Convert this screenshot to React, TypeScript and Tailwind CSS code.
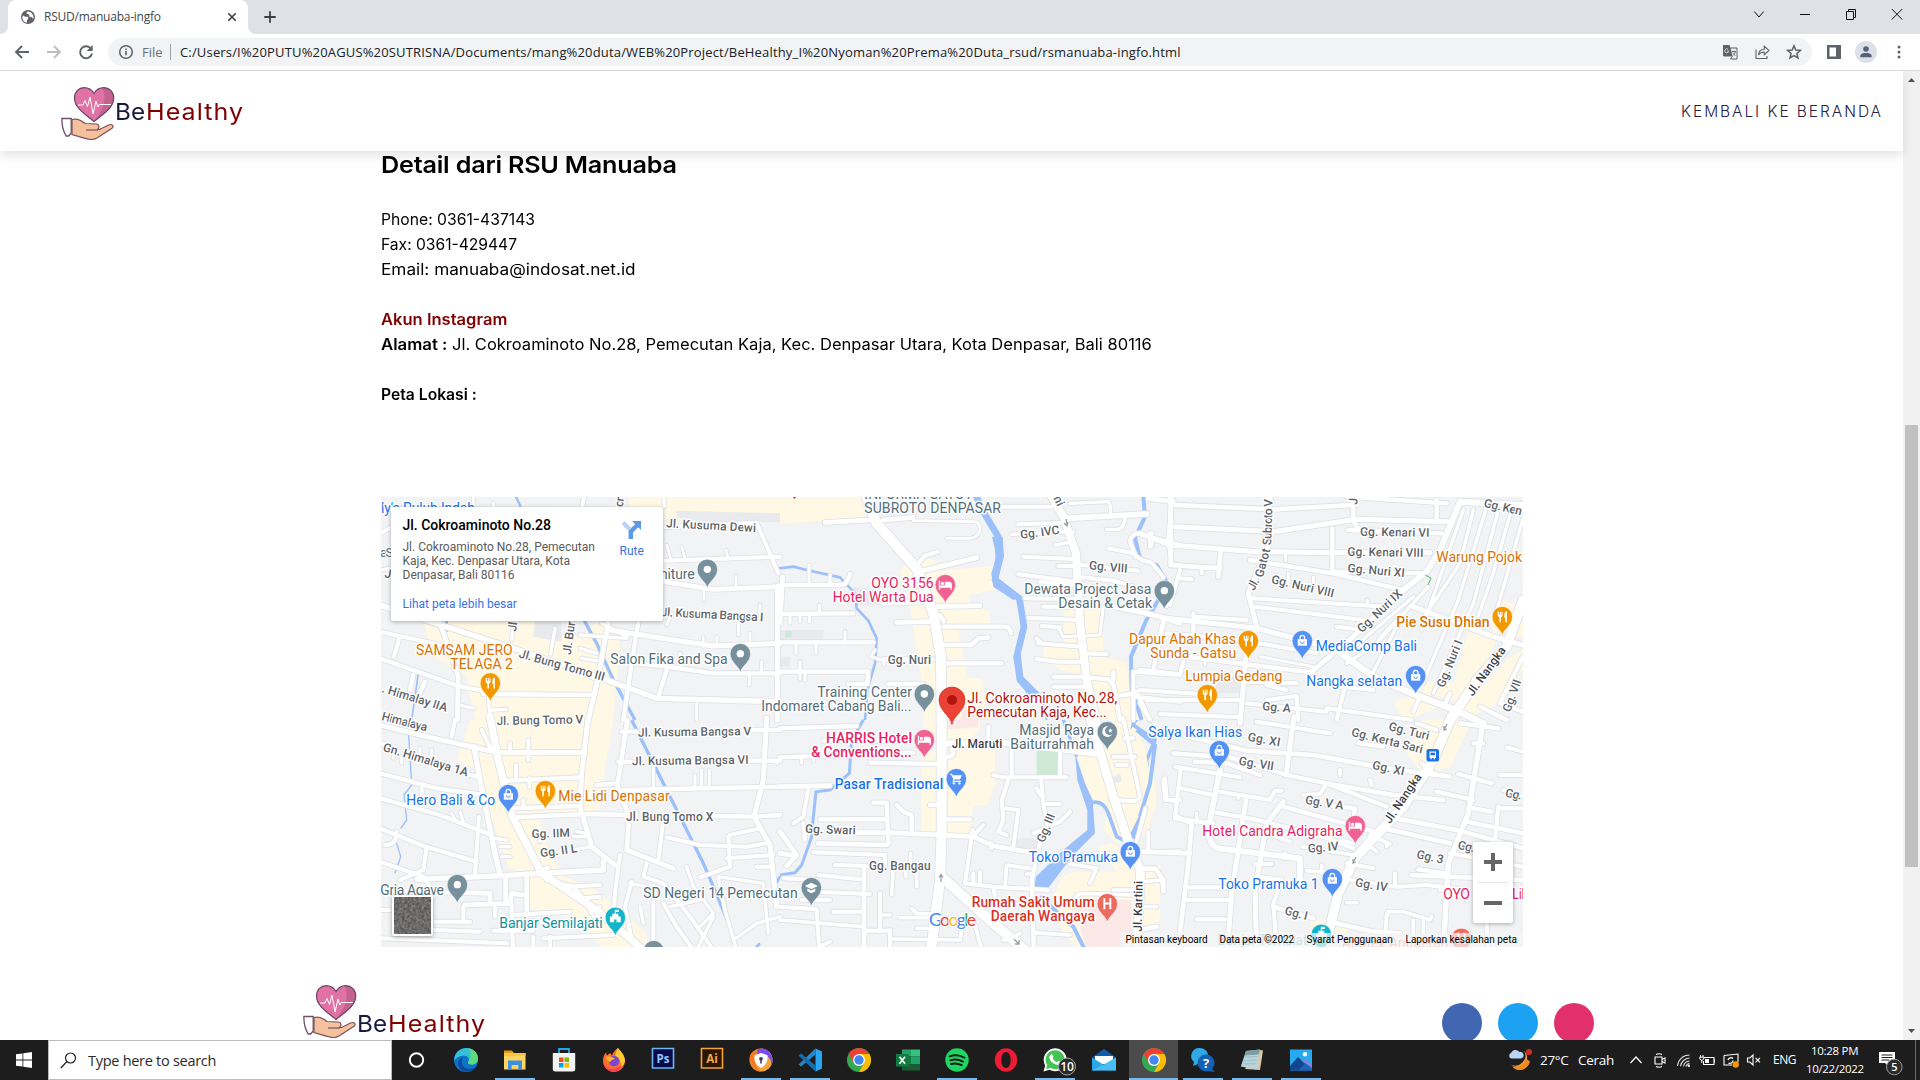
import React, { useLayoutEffect, useRef, useState } from "react";

/* Text that fills a given width, by spreading its letters or by stretching them. */
function Fit({ w, wide = false, className = "", children }: { w: number; wide?: boolean; className?: string; children: string }) {
  const ref = useRef<HTMLSpanElement>(null);
  const [natural, setNatural] = useState(0);
  useLayoutEffect(() => {
    if (ref.current) setNatural(ref.current.offsetWidth);
  }, [children]);
  const style = !natural
    ? undefined
    : wide
      ? { transform: `scaleX(${w / natural})` }
      : { letterSpacing: (w - natural) / Math.max(1, children.length - 1) + "px" };
  return (
    <span className={"inline-block shrink-0 whitespace-pre " + className} style={{ width: w }}>
      <span ref={ref} className="inline-block origin-left" style={style}>{children}</span>
    </span>
  );
}

/* ------------------------------------------------------------------ */
/* Map data: the map is cut in six tiles with 3 units to the pixel      */
/* ------------------------------------------------------------------ */

type Road = [number, string];
type Label = {
  t: string; x: number; y: number; w: number; r?: number; s?: number; c?: string; b?: boolean; street?: boolean;
};
type PinData = { x: number; y: number; c: string; k: string };
type Tile = {
  ox: number; oy: number; yellow: string; gray?: string; green?: string; pink?: string;
  water: Road[]; waterFill?: string; roads: Road[]; labels: Label[]; pins: PinData[];
};

const GRAY = "#78909c";
const ORANGE = "#f29900";
const BLUE = "#5491f5";
const PINK = "#f06292";
const TEAL = "#12b5cb";
const RED = "#ec6a5e";

const tGray = "#546e7a";
const tOrange = "#d97200";
const tBlue = "#1a73e8";
const tPink = "#e91e63";
const tTeal = "#0f8f9c";
const tRed = "#d93025";

const st = (t: string, x: number, y: number, w: number, r = 0, c = "#5f6368"): Label => ({ t, x, y, w, r, c, s: 36, street: true });
const poi = (t: string, x: number, y: number, w: number, c: string, b = false): Label => ({ t, x, y, w, c, b, s: 42 });

const tiles: Tile[] = [
  {
    ox: 380, oy: 490,
    yellow: "M745 20H1200V96L850 86L750 70Z M130 395H465V440L520 430L600 440L650 395L720 450L700 690H285L270 620L260 560L160 500Z",
    gray: "M890 62L1200 70V96L960 96L890 82Z M465 395H545V455L460 440Z",
    water: [[8, "M200 390V425"], [10, "M612 390L650 460L700 570L765 690"], [7, "M408 20L422 50"], [5, "M115 550L95 690"], [6, "M1200 232l-8 6"]],
    roads: [
      [16, "M0 345L120 385L400 475L680 570L830 625L1200 635"],
      [15, "M685 395L655 560L625 690"], [13, "M775 395L755 520L730 690"],
      [12, "M0 425L180 465M42 500L58 445M0 130L60 100"],
      [14, "M178 395L205 470L235 560L232 690"],
      [13, "M0 505L235 588L305 602M100 555L90 600M135 575L115 620"],
      [13, "M310 612L640 615"], [10, "M325 620L330 690M335 660L378 658M240 645L280 655"],
      [12, "M612 20L605 60M855 112L1130 98L1195 250M850 212L1200 200"],
      [14, "M850 275L1000 298L1200 290"],
      [8, "M860 165L872 205M905 170L915 205M1038 180L1045 205M1068 258V290M972 298V330M280 20V50M340 40V50"],
      [15, "M690 420L880 450L1000 468L1200 460"],
      [15, "M1192 290V690"],
      [8, "M860 405L875 370M970 440V470M1110 430V465M1075 400V435M1140 345V370M1010 440V470"],
      [13, "M765 520L860 530L1000 550L1200 550"], [13, "M860 540L835 620"],
      [9, "M900 490V530M1108 550V585M1145 515V550M950 640V690"],
      [10, "M400 395L395 450M525 415L512 492M600 435L740 445M600 475L650 490M605 505L650 512M665 400L742 440M610 550L640 565"],
      [10, "M0 240L28 235M852 20V50"],
    ],
    labels: [
      { t: "ly's Puluh Indah", x: 3, y: 70, w: 282, c: tBlue, s: 42 },
      { t: "a S", x: 0, y: 200, w: 40, c: tGray, s: 40 },
      st("J", 12, 262, 18, 10), st("Jl. Kusuma Dewi", 858, 112, 270, 3), st("Jl. Kusuma Bangsa I", 842, 378, 308, 3),
      st("Jl. Bung Tomo III", 415, 502, 265, 15.5), st(". Himalay IIA", 4, 606, 203, 17), st("Himalaya", 3, 690, 140, 14),
      st("Jl. Bur", 572, 495, 100, -82), st("Jl", 408, 425, 28, -82), st("Jl. Bung Tomo V", 350, 705, 260, -1), st("or", 728, 52, 30, -82),
      { t: "niture", x: 840, y: 266, w: 104, c: tGray, s: 42 },
      poi("Salon Fika and Spa", 691, 522, 352, tGray),
      poi("SAMSAM JERO", 108, 495, 290, tOrange), poi("TELAGA 2", 211, 537, 188, tOrange),
    ],
    pins: [{ x: 982, y: 238, c: GRAY, k: "dot" }, { x: 1081, y: 491, c: GRAY, k: "dot" }, { x: 331, y: 579, c: ORANGE, k: "food" }],
  },
  {
    ox: 780, oy: 490,
    yellow: "M0 20H245L255 80L125 92L0 102Z M410 205L460 208L480 242L635 228L645 300L565 315L570 340L630 365V400L535 412L560 560L610 570L620 690H430V600L405 460L385 310L357 240Z M850 360H970V500L1035 515L1055 600L1100 690H940L910 560L845 540L790 510V470H850Z",
    gray: "M220 290L300 300V345H215Z M0 420H130V450H0Z M0 500H30V530H0Z",
    green: "M15 423h20v20h-20z",
    pink: "M545 650L620 650L640 690H545Z",
    water: [
      [20, "M585 10L610 65L655 140L656 205L645 270L718 325L732 410L710 500L720 570L765 620"],
      [8, "M0 235L40 230L80 240L180 262L225 310L230 355L265 392L290 445L285 520L262 600L255 690"],
      [12, "M1090 20L1095 80L1065 145L1080 205L1130 225L1160 275M1135 330L1098 392L1053 500L1055 600L1085 690"],
      [6, "M765 620L790 640L800 690"],
    ],
    waterFill: "M636 140H668L672 200L655 265L720 318L700 330L640 290L634 250L650 200Z M700 500L722 490L730 560L780 610L740 610L715 570Z",
    roads: [
      [30, "M255 10L290 100L410 235L460 370L483 500L485 700"],
      [24, "M810 10L850 80L888 190L900 400L920 570L950 700"],
      [14, "M135 97L270 90M310 90L400 82"],
      [8, "M500 145L570 145Q600 140 600 118Q600 95 580 95L400 92"],
      [12, "M410 225L435 197L475 185"], [15, "M430 242L590 203"],
      [14, "M350 397L450 395M310 340L440 335M470 350L600 347"],
      [13, "M490 410H675Q690 412 693 430M490 465H575L595 445L625 443M500 520H665M460 508H310M325 582H430M480 375L492 395"],
      [13, "M0 285L190 285Q205 275 210 252M0 372L220 370M0 457H280M0 545H265L262 582H205"],
      [9, "M87 225V280M150 255V285M30 375V400M60 375V395M88 375V395M118 345V370M195 425V455M48 460V490M108 460V490M60 515V568M75 545V570M285 480L272 500L310 512L312 525"],
      [14, "M8 260L0 400"],
      [12, "M640 50H815M715 103L860 98"], [17, "M860 85L1100 72"],
      [10, "M870 40L985 35Q992 40 992 72M1035 85Q1032 118 1010 118H980M695 133L880 125M825 165L880 155"],
      [12, "M730 200L885 207M835 228H890M715 253L890 275M780 275L880 285M735 325L895 328M790 350H890M745 383L900 390M785 408L840 412"],
      [12, "M905 262L1000 272L1060 290M905 225L1075 242"],
      [9, "M835 410L848 440L960 435L970 350"],
      [12, "M910 490L980 493M775 460L905 470M770 507L830 515H900M820 560H910M820 590H920M770 445L785 460"],
      [13, "M920 562L985 568Q1005 580 1005 610L1020 690M1000 620L1065 610M1000 545V570"],
      [12, "M985 175L1055 188L1085 210L1115 218L1150 262M1200 165L1070 130Q1050 140 1050 155L1068 200M1115 130V165"],
      [12, "M1175 20L1165 150L1175 225H1200"],
      [14, "M1000 350L1120 375L1200 400"], [9, "M1155 390L1120 540M1160 350L1180 290"],
      [12, "M1060 690L1060 550M1060 545L1200 555M1070 605L1110 690M1070 620L1200 635"],
    ],
    labels: [
      poi("INFORMA GATOT", 253, 28, 325, tGray), poi("SUBROTO DENPASAR", 253, 69, 410, tGray),
      st("Gg. IVC", 722, 146, 118, -7), st("Gg. VIII", 926, 238, 116, 5), st("Gg. Nuri", 323, 521, 130, 0),
      st("ni", 820, 24, 30, 65),
      poi("OYO 3156", 274, 295, 187, tPink), poi("Hotel Warta Dua", 158, 337, 303, tPink),
      poi("Dewata Project Jasa", 733, 312, 381, tGray), poi("Desain & Cetak", 835, 354, 281, tGray),
      poi("Training Center", 112, 622, 284, tGray), poi("Indomaret Cabang Bali...", -56, 664, 450, tGray),
      poi("Jl. Cokroaminoto No.28,", 562, 640, 450, "#b31412"), poi("Pemecutan Kaja, Kec...", 562, 682, 418, "#b31412"),
    ],
    pins: [{ x: 496, y: 284, c: PINK, k: "bed" }, { x: 1153, y: 302, c: GRAY, k: "dot" }, { x: 433, y: 612, c: GRAY, k: "dot" }],
  },
  {
    ox: 1140, oy: 490,
    yellow: "M985 425L1070 445L1040 520L960 640L900 620L830 610L870 572L940 580Z M1085 330L1125 340L1110 400L1060 440L1050 380Z M1110 500L1149 480V540L1060 650L970 690L960 660Z M770 630L830 615L900 650L800 690L765 650Z M1120 400H1149V440H1110Z",
    gray: "M205 560H300V610H230Z",
    green: "",
    water: [],
    roads: [
      [14, "M92 20V225L240 235M242 180L235 260"], [12, "M120 240L90 345M120 265L155 268M30 130V170M185 235V250"],
      [14, "M100 45L400 58L640 45M25 25L100 35"],
      [13, "M640 20V95L660 120H625"],
      [15, "M100 110L400 125L650 88L925 95"],
      [15, "M0 130L90 165L350 185L580 188H870"], [13, "M577 115V240"],
      [15, "M390 20L385 170L325 310L350 410L318 500L300 700"],
      [13, "M620 20L920 40M890 30V88M640 120L905 130M580 245L860 250"],
      [13, "M330 210L580 250L780 298"], [9, "M437 195V210M445 250V285M520 262V290M682 330V340"],
      [18, "M790 300L860 245L900 180L960 35L1149 45"],
      [15, "M785 305L640 440L515 545"], [12, "M335 325L740 350M345 350L670 390M590 410L670 420"],
      [15, "M0 365L80 385L350 415L600 480"], [12, "M160 370V430M70 390L40 540M80 430L300 450L530 490M160 380L320 390"],
      [13, "M100 495L520 548M0 540L120 553L130 515"], [8, "M195 480V525M360 500L520 530"],
      [10, "M820 320L620 490M865 290L710 460L620 520M780 390L700 545M770 390L715 450"],
      [15, "M820 350L1060 440L1149 465"],
      [20, "M590 480L700 560L820 612L950 662L1030 700"],
      [10, "M970 60L845 420M1040 50L955 330L840 600M1075 60L1000 340L880 610M1110 75L1060 250L1000 420M1149 85L1065 380M1000 60L960 220L840 400"],
      [28, "M1149 330L1100 470L1010 570L925 700"],
      [13, "M1149 500L1080 640L1149 665M1020 650L1100 690M930 610L910 650"],
      [12, "M0 600L180 612M20 630L300 630M60 672L300 682M0 640L30 690M310 575L470 580M380 585L440 600M380 630L470 618L475 690"],
      [12, "M550 560L600 590L700 600M620 570L590 690M560 655L815 690M320 640L560 665M820 665L840 620"],
    ],
    labels: [
      st("Subroto V", 393, 166, 138, -88), st("Gatot", 368, 264, 88, -75), st("Jl.", 342, 304, 36, -62),
      st("J", 652, 44, 16, -88), st("Gg. Kenari VI", 660, 137, 208, 1), st("Gg. Kenari VIII", 622, 197, 228, 1), st("Gg. Nuri XI", 622, 246, 172, 5),
      st("Gg. Nuri VIII", 392, 279, 192, 13), st("Gg. Nuri IX", 665, 430, 170, -43), st("Gg. Ken", 1030, 50, 116, 13),
      st("Gg. Nuri I", 912, 595, 150, -68), st("Jl. Nangka", 998, 620, 172, -54, "#3c4043"), st("Gg. VII", 1110, 668, 100, -70), st("Gg. A", 366, 660, 86, 5),
      poi("Warung Pojok", 889, 216, 257, tOrange), poi("Pie Susu Dhian", 769, 411, 280, tOrange, true),
      poi("Dapur Abah Khas", -33, 462, 321, tOrange), poi("Sunda - Gatsu", 31, 504, 258, tOrange),
      poi("Lumpia Gedang", 136, 573, 291, tOrange),
      poi("MediaComp Bali", 527, 483, 304, tBlue), poi("Nangka selatan", 499, 588, 288, tBlue),
    ],
    pins: [
      { x: 325, y: 452, c: ORANGE, k: "food" }, { x: 487, y: 452, c: BLUE, k: "bag" }, { x: 1087, y: 380, c: ORANGE, k: "food" },
      { x: 827, y: 557, c: BLUE, k: "bag" }, { x: 202, y: 614, c: ORANGE, k: "food" },
    ],
  },
  {
    ox: 380, oy: 720,
    yellow: "M270 0H700L655 270L600 278H470L510 400L550 470L640 505L720 570L800 640V690H680L560 590L450 565L440 460L385 445L330 280L290 150L232 120Z",
    water: [[10, "M755 0L850 190L910 310L970 430L1000 500L1050 620"], [4, "M85 30L95 195L72 225L80 300L62 325M50 370L62 410L45 460"], [8, "M1200 468L1175 520M1120 690l20-20"]],
    roads: [
      [15, "M0 15L140 50L350 97L615 98"],
      [22, "M330 -10L355 120L395 285L485 460L650 570L790 690"],
      [12, "M305 30L335 92M445 60V120M390 70V92M448 175V200M408 135V175M430 240V260M225 0L215 50"],
      [13, "M365 183L600 172M400 265L595 258M400 292L620 282L740 285M1000 288L1125 290L1200 285"],
      [15, "M625 -10L605 160L600 260L635 380L705 435"],
      [16, "M282 80L300 180L345 400L360 465"],
      [13, "M0 160L170 205L310 225M0 235L180 285L335 345M0 325L130 378L290 425M270 165L300 172M0 70L20 75"],
      [12, "M297 290L285 460M140 380L130 450L60 480M50 335Q50 375 15 375M0 425L130 470L160 515M125 205V235"],
      [9, "M215 280L225 300M240 275L250 305M120 85V100M155 90V115M65 110V130M40 100V115"],
      [16, "M110 478L370 467L480 460L670 450V425"],
      [12, "M500 465L540 490L580 500L610 535L660 530M500 480L560 500L660 495M480 450L505 443"],
      [10, "M345 355L380 360M360 380H390M365 410H390M580 350H620M590 335L620 340M480 360V365M580 390L630 380"],
      [14, "M377 470V550M440 470V590M255 555L390 550L395 520L430 525M150 515L330 520V550"],
      [12, "M395 585L570 575M160 605H270M250 560V600M395 550V620L400 690M160 630L300 635M340 632H460M490 655L700 645M460 690V650M510 650V690M440 605H520M0 570H30M0 655L380 670M345 555V590"],
      [11, "M620 550L640 590M660 560L650 590"],
      [14, "M742 0L712 200L748 290L740 390L880 445"],
      [13, "M725 35H770M1115 30H1200M715 125H755M1110 122H1200M650 195L710 190M730 210L1200 200"],
      [9, "M820 140V200M945 165V200M965 150V200M988 150V200M770 275V300M1185 122L1190 130"],
      [15, "M1160 -5L1150 180L1122 290L1170 375L1190 560"],
      [12, "M850 300L835 420M860 352L960 375L1100 380L1170 368M1045 350L1050 440L960 472M1050 345L1140 325M1040 415L1180 405M1130 440H1180"],
      [12, "M720 405L705 520L700 600M800 430L790 470L850 490L930 590L1000 690M755 485L735 560L755 660M820 545V690M850 550L890 620L940 690"],
      [10, "M920 440L940 500L1000 580L960 620M1015 475L1035 570L1070 690M1015 470L1150 490L1165 640M870 560L960 540M950 690L1000 590M1060 660L1130 610L1200 590M780 560L790 610M750 490L800 500"],
    ],
    labels: [
      st("Gn. Himalaya 1A", 7, 92, 265, 17),
      st("Jl. Kusuma Bangsa V", 774, 50, 340, -0.8), st("Jl. Kusuma Bangsa VI", 756, 136, 350, -0.8), st("Jl. Bung Tomo X", 738, 303, 262, 0),
      st("Gg. IIM", 455, 354, 115, -2), st("Gg. II L", 482, 412, 112, -8),
      poi("Hero Bali & Co", 79, 255, 267, tBlue), poi("Mie Lidi Denpasar", 535, 243, 334, tOrange),
      poi("Gria Agave", 1, 525, 191, tGray), poi("Banjar Semilajati", 358, 624, 310, tTeal), poi("SD Negeri 14 Pemecutan", 790, 534, 463, tGray),
    ],
    pins: [
      { x: 385, y: 224, c: BLUE, k: "bag" }, { x: 496, y: 212, c: ORANGE, k: "food" }, { x: 232, y: 494, c: GRAY, k: "dot" },
      { x: 706, y: 592, c: TEAL, k: "civic" }, { x: 821, y: 692, c: GRAY, k: "dot" },
    ],
  },
  {
    ox: 780, oy: 720,
    yellow: "M425 90H645V195L620 255H580L570 345L425 335Z M500 0H600V30L520 100H500Z M890 100L1000 0H1060L1120 150L1130 250L1100 340L1010 370L970 330L985 270L930 230Z M830 510Q840 455 900 455L1010 455L950 380L1000 370L1130 470V600L1040 690H900L850 640L820 560Z M430 0H470V60H430Z",
    gray: "M990 175L1020 160L1025 185L1000 190Z M710 355H780V400L705 385Z",
    green: "M770 90h65v75h-65z",
    pink: "M885 535L1055 540V640H1035V690H920L895 600Z M500 0H595V22L505 28Z",
    water: [
      [9, "M250 0L215 60L208 160L150 210L108 215L98 310L95 350L65 435L45 458L0 465"],
      [10, "M850 0L890 110"],
      [11, "M935 248Q970 240 985 280L1010 350L1045 368L1105 240L1100 120L1125 60L1060 15V0"],
      [12, "M780 530L830 575L880 620L915 690"],
    ],
    waterFill: "M885 100L915 190L938 240L945 340L880 405L800 510H762L768 470L850 390L922 330L922 270L892 180Z M1045 350L1085 290L1105 200L1115 240L1070 360Z M1050 30L1060 0H1075Z",
    roads: [
      [30, "M485 -10V330L480 480L452 700"], [30, "M485 470L600 575L740 695"],
      [26, "M930 -10L965 110L1000 230L1050 380L1082 450L1070 700"],
      [18, "M500 70H690L880 92L950 102"],
      [12, "M625 20V65M695 75V165M840 95V168M640 165L670 172H860"],
      [13, "M0 25L230 18M130 62H400M0 112L400 98M270 128L470 132M515 90Q530 105 500 112"],
      [9, "M65 115V130M100 112V122"],
      [14, "M0 200L150 197"], [12, "M85 205L70 290L40 310M70 310L75 360"],
      [13, "M280 248H320L325 370M120 298L320 297M350 255L370 275L395 285V330M450 255H480M500 298H570"],
      [14, "M330 338L580 350L640 378L760 398M230 338H325M115 370L320 375M0 335L50 405L20 438M0 400L50 408"],
      [12, "M100 397L315 405V440M165 435L270 438M10 475L110 480M115 465L240 478"],
      [14, "M252 440V700"], [12, "M100 515L270 522M65 540H150M160 575H245M0 560L110 568L118 690M300 520V630M250 632H325M330 630V690"],
      [11, "M340 440L335 525M392 400V430M410 460V500M378 455V470M330 657L540 660L545 628M395 565L410 580L465 582M360 593H450M300 585H330M0 600L250 620M120 680L150 665M410 625H470M585 615L605 690"],
      [12, "M578 330L555 490L640 500L805 510M578 350L610 315M600 455V485M580 460V490M640 500L645 530"],
      [12, "M685 180L665 240L670 300L655 335L680 345M675 265L715 270L700 380M783 175L790 250L805 330M770 205L785 230M790 252H840M870 275L840 305L760 340M634 370V385"],
      [13, "M780 370L755 480L762 700"], [11, "M675 500L680 435L750 445M740 462H760M760 638L870 645M760 585L770 570M720 640L690 660L670 660"],
      [12, "M1030 -5L1080 230Q1075 245 1050 243L1010 240M1000 110H1065M1010 135H1040M1035 55H1060"],
      [12, "M1097 265L1070 365M1150 180L1155 240L1200 240"],
      [11, "M870 432L950 445L930 490M905 405L1000 400M1090 398L1200 393M1105 340V390M1090 485L1145 480L1150 510M1000 510H1080M880 560Q880 520 910 520L1060 525M1090 447H1125M1085 560H1130M1090 630L1120 620"],
    ],
    labels: [
      st("Jl. Maruti", 515, 84, 152, 0, "#3c4043"), st("Gg. Swari", 75, 338, 152, 2), st("Gg. Bangau", 267, 450, 185, 0),
      st("Gg. III", 792, 370, 90, -68), st("Jl. Kartini", 1085, 635, 152, -89, "#3c4043"),
      poi("HARRIS Hotel", 138, 69, 258, tPink, true), poi("& Conventions...", 94, 111, 301, tPink, true),
      poi("Masjid Raya", 718, 45, 224, tGray), poi("Baiturrahmah", 691, 87, 251, tGray),
      poi("Pasar Tradisional", 164, 207, 326, tBlue, true), poi("Toko Pramuka", 746, 426, 268, tBlue),
      poi("Rumah Sakit Umum", 575, 561, 369, tRed, true), poi("Daerah Wangaya", 632, 603, 313, tRed, true),
    ],
    pins: [
      { x: 433, y: 59, c: PINK, k: "bed" }, { x: 982, y: 35, c: GRAY, k: "moon" }, { x: 529, y: 176, c: BLUE, k: "cart" },
      { x: 1051, y: 395, c: BLUE, k: "bag" }, { x: 94, y: 503, c: GRAY, k: "grad" }, { x: 982, y: 551, c: RED, k: "H" },
    ],
  },
  {
    ox: 1140, oy: 720,
    yellow: "M0 60L20 110L45 240L30 300L0 330Z M0 470L60 430V600L0 640Z M845 0H960L990 15L930 145L840 150L800 100Z M510 600H570L630 615L620 640H510Z",
    water: [[12, "M-10 30L45 75L30 190L0 290"]],
    roads: [
      [28, "M935 -10L880 120L790 260L700 355L645 415L595 520L565 640"],
      [14, "M150 50L320 92L520 105L740 145L930 170"],
      [13, "M100 100L270 112L440 165L560 190L760 225L910 240M165 125L260 130L360 165"],
      [15, "M462 -10L438 165"], [12, "M350 5L570 40M655 70L730 80M830 10L890 30M845 130L880 160"],
      [17, "M240 150L208 310Q200 375 235 385L480 415V490"],
      [12, "M105 140L300 172M122 150L105 290M75 175L80 238L110 245M125 205L220 225M240 215L390 240L405 212H425M490 225L540 222L560 190"],
      [15, "M318 240L275 520L262 690"], [13, "M230 278L330 295L550 350L640 385M105 295L220 310M395 345L450 365"],
      [15, "M430 245L380 310L345 510L350 690"], [13, "M430 260L650 320L720 340M560 190L740 260M560 255L645 265L640 300"],
      [14, "M0 395L150 400M110 290L155 310L145 430L120 640"], [10, "M25 335V390M170 280V310M295 225V235M370 325V345"],
      [13, "M140 502H260M140 540H270M170 598H255M0 445H45L70 480V515M0 630L50 620"],
      [12, "M355 470L425 480L400 550L410 690M345 432H395M435 400V415"],
      [14, "M400 560L520 595M570 605L700 635L780 640"],
      [11, "M500 452L570 458M545 435V455M620 548H650M485 380L640 405M600 360L640 370"],
      [12, "M620 430L700 445M630 480L770 500L860 495L980 510M765 460V495M600 150V165M690 180L695 195"],
      [11, "M740 590L745 575H790L870 600L875 590M740 580L735 660M820 600V690M850 605V640"],
      [14, "M740 290L950 330L1149 385M730 325L930 370"], [11, "M690 345L750 372M685 375L710 395M740 380V370"],
      [16, "M1027 20L985 280L925 430L910 690"],
      [13, "M960 10L1075 25M1000 70H1030M955 162L1055 190M890 215L1000 240M985 262L1055 275M980 305L1149 340M1075 260L1062 390M1075 265H1149M835 448L915 460M815 465L1149 480"],
      [12, "M1100 82L1149 95M1080 165H1149M1090 210L1149 230M930 400L1149 440M1040 610L1045 690M900 510H960"],
    ],
    labels: [
      st("Gg. XI", 322, 62, 98, 10), st("Gg. VII", 295, 134, 106, 9), st("Gg. XI", 695, 146, 98, 12), st("Gg. Turi", 744, 30, 124, 14),
      st("Gg. Kerta Sari", 632, 47, 220, 14), st("Gg. V A", 494, 251, 116, 9), st("Gg. IV", 505, 398, 92, -5), st("Gg. 3", 828, 414, 82, 12), st("Gg. IV", 644, 499, 98, 9),
      st("Gg. I", 432, 583, 70, 14), st("Gg.", 1094, 230, 50, 10), st("Gg.", 952, 386, 50, 12),
      st("Jl. Nangka", 750, 313, 172, -56, "#3c4043"),
      poi("Salya Ikan Hias", 25, 51, 282, tBlue), poi("Hotel Candra Adigraha", 187, 348, 421, tPink), poi("Toko Pramuka 1", 235, 507, 301, tBlue),
      poi("OYO", 910, 537, 80, tPink), poi("Lik", 1116, 537, 50, tPink),
      poi("Banjar Tamsiat", 232, 676, 270, "#5db8c1"), poi("Apotek Anugerah", 605, 683, 320, "#eb8a80"),
    ],
    pins: [
      { x: 238, y: 92, c: BLUE, k: "bag" }, { x: 646, y: 317, c: PINK, k: "bed" }, { x: 577, y: 476, c: BLUE, k: "bag" },
      { x: 544, y: 643, c: TEAL, k: "civic" }, { x: 964, y: 655, c: RED, k: "H" },
    ],
  },
];

const tf = (t: Tile) => `translate(${t.ox} ${t.oy}) scale(0.33333)`;

function Glyph({ k }: { k: string }) {
  switch (k) {
    case "dot": return <circle r="3.7" fill="#fff" />;
    case "food": return <path d="M-4.6-5v3.6a2 2 0 0 0 1.6 2V5.5h1.6V.6A2 2 0 0 0 .2-1.400V-5h-1v3h-.7v-3h-1v3h-.8v-3zM4.600-5.500C2.800-5.500 2-3.500 2-1.200V1h1.100v4.500h1.500z" fill="#fff" />;
    case "bag": return <g><path d="M-4.600-1.500h9.200V5h-9.200z" fill="#fff" /><path d="M-2.300-1.500v-1.500a2.300 2.300 0 0 1 4.600 0v1.500" fill="none" stroke="#fff" strokeWidth="1.300" /><path d="M-1.900.800a1.900 1.900 0 0 0 3.800 0" fill="none" stroke={BLUE} strokeWidth="1" /></g>;
    case "bed": return <path d="M-6.500-4h1.300v4.800h4.700v-3.600h4.500a2.500 2.500 0 0 1 2.500 2.500v5.300H5.200V3h-10.400v2h-1.300zM-2.900-2.800a1.600 1.600 0 1 1 0 3.200 1.600 1.600 0 0 1 0-3.200z" fill="#fff" />;
    case "cart": return <g fill="#fff"><path d="M-6.500-5h2.200l.7 1.500h9.200l-2 4.300h-5.400l-.7 1.300h7v1.200h-8.500l1-2.700-2.300-4.500h-1.200z" /><circle cx="-2.400" cy="4.700" r="1.200" /><circle cx="3" cy="4.700" r="1.200" /></g>;
    case "moon": return <g fill="#fff"><path d="M1.500-5.300A5.300 5.300 0 1 0 5 2.400 4.400 4.400 0 1 1 1.500-5.300z" /><path d="M3-3.500l.7 1.600 1.700.1-1.300 1.100.4 1.700L3 .1 1.600 1l.4-1.700-1.300-1.100 1.700-.1z" /></g>;
    case "grad": return <g fill="#fff"><path d="M0-5l6.500 3.300L0 1.700l-6.500-3.400zM-4 .8L0 2.900 4 .8v2.700L0 5.500l-4-2z" /></g>;
    case "civic": return <g fill="#fff"><path d="M-.5-7.500h4v2.200H.6V-3.500H3v2.700h2.400V5H1.200V2.200h-2.400V5h-4.200V-.8H-3v-2.700h2.500z" /></g>;
    default: return <path d="M-4-5.500h2v4.300h4v-4.300h2v11h-2V.8h-4v4.700h-2z" fill="#fff" />;
  }
}

function Pin({ p }: { p: PinData }) {
  return (
    <g transform={`translate(${p.x} ${p.y}) scale(3)`}>
      <path d="M0 18.700C-1.200 12.500-10.200 8.500-10.200 0A10.200 10.200 0 1 1 10.200 0C10.200 8.500 1.200 12.500 0 18.700z" fill={p.c} stroke="#fff" strokeOpacity=".7" strokeWidth=".8" />
      <Glyph k={p.k} />
    </g>
  );
}

function MapText({ l }: { l: Label }) {
  return (
    <text
      transform={`translate(${l.x} ${l.y}) rotate(${l.r ?? 0})`}
      fontSize={l.s} textLength={l.w} fill={l.c} fontWeight={l.street || l.b ? 500 : 400}
      stroke="#fff" strokeWidth={9} strokeOpacity=".9" strokeLinejoin="round" paintOrder="stroke"
    >{l.t}</text>
  );
}

function MapCanvas() {
  return (
    <svg className="block h-[450px] w-[1142px] font-['Roboto',sans-serif]" viewBox="381 497 1142 450">
      <rect x="381" y="497" width="1142" height="450" fill="#f1f3f5" />
      {tiles.map((t, i) => (
        <g key={i} transform={tf(t)}>
          <path d={t.yellow} fill="#fef8e4" />
          {t.gray && <path d={t.gray} fill="#e8eaed" />}
          {t.green && <path d={t.green} fill="#ceead6" />}
          {t.pink && <path d={t.pink} fill="#fce8e6" />}
          {t.waterFill && <path d={t.waterFill} fill="#9cc0f9" />}
          {t.water.map(([w, d], j) => <path key={j} d={d} fill="none" stroke="#9cc0f9" strokeWidth={w} strokeLinejoin="round" />)}
        </g>
      ))}
      {tiles.map((t, i) => (
        <g key={i} transform={tf(t)} fill="none" stroke="#dee1e6" strokeLinecap="round" strokeLinejoin="round">
          {t.roads.map(([w, d], j) => <path key={j} d={d} strokeWidth={w + 5} />)}
        </g>
      ))}
      {tiles.map((t, i) => (
        <g key={i} transform={tf(t)} fill="none" stroke="#fff" strokeLinecap="round" strokeLinejoin="round">
          {t.roads.map(([w, d], j) => <path key={j} d={d} strokeWidth={w} />)}
        </g>
      ))}
      <g fill="none" stroke="#9aa0a6" strokeWidth="1.300">
        <path d="M941 882v-7m-2 2.500l2-3 2 3M1014 939l5 5m0-4v4h-4M1066 519l1 6m-3-2l3 3 1-4M1356 857l-3 6m0-4v4l3-1M1447 724l-3 6m0-4v4l3-1" />
      </g>
      <path d="M1425 575l6 3-3 7" fill="none" stroke="#5bb974" strokeWidth="1" />
      {tiles.map((t, i) => <g key={i} transform={tf(t)}>{t.labels.filter((l) => l.street).map((l, j) => <MapText key={j} l={l} />)}</g>)}
      {tiles.map((t, i) => <g key={i} transform={tf(t)}>{t.pins.map((p, j) => <Pin key={j} p={p} />)}</g>)}
      {tiles.map((t, i) => <g key={i} transform={tf(t)}>{t.labels.filter((l) => !l.street).map((l, j) => <MapText key={j} l={l} />)}</g>)}
      <path d="M793 497h3l-1.500 2z" fill="#e91e63" />
      <rect x="1426.500" y="749" width="12.500" height="12.500" rx="2" fill="#1a73e8" />
      <path d="M1429.500 751.500h6.500v6.500h-1v1.200h-1.200V758h-2.100v1.200h-1.200V758h-1z" fill="#fff" />
      <path d="M1430.500 752.700h4.500v2.500h-4.500z" fill="#1a73e8" />
      <g transform="translate(952 700)">
        <path d="M0 24.500C-1 16-13 11-13 0A13 13 0 1 1 13 0C13 11 1 16 0 24.500z" fill="#ea4335" stroke="#c5221f" strokeWidth=".6" />
        <circle r="5" fill="#b31412" />
      </g>
      <text x="929" y="925.5" fontSize="17.500" textLength="47" fontWeight="400" className="font-['Lato',sans-serif]" stroke="#fff" strokeWidth="2" paintOrder="stroke">
        <tspan fill="#4285f4">G</tspan><tspan fill="#ea4335">o</tspan><tspan fill="#fbbc04">o</tspan><tspan fill="#4285f4">g</tspan><tspan fill="#34a853">l</tspan><tspan fill="#ea4335">e</tspan>
      </text>
    </svg>
  );
}

function MapView() {
  return (
    <div className="relative h-[450px] w-[1142px] overflow-hidden font-['Roboto',sans-serif]">
      <MapCanvas />
      <div className="absolute left-[10px] top-[10px] flex h-[114px] w-[272px] rounded-[2px] bg-white shadow-[0_1px_4px_rgba(0,0,0,0.3)]">
        <div className="flex w-[220px] flex-col pl-3 pt-[10px]">
          <Fit w={148} className="h-4 text-[14px] font-medium leading-4 text-black">Jl. Cokroaminoto No.28</Fit>
          <div className="mt-[7px] flex flex-col text-[12px] leading-[14px] text-[#5b5b5b]">
            <Fit w={192}>Jl. Cokroaminoto No.28, Pemecutan</Fit>
            <Fit w={167}>Kaja, Kec. Denpasar Utara, Kota</Fit>
            <Fit w={112}>Denpasar, Bali 80116</Fit>
          </div>
          <Fit w={114} className="mt-[15px] text-[12px] leading-[14px] text-[#3a73e6]">Lihat peta lebih besar</Fit>
        </div>
        <div className="flex w-[42px] flex-col items-center pt-[13px]">
          <svg className="h-[19px] w-[19px]" viewBox="0 0 19 19">
            <path d="M1 2.500L7.500 9" stroke="#b9d2f8" strokeWidth="4.500" />
            <path d="M8.800 19V11.500L15 5.500" fill="none" stroke="#5c9ae8" strokeWidth="4.500" />
            <path d="M10 1h9v9z" fill="#5c9ae8" />
          </svg>
          <Fit w={24} className="mt-[4px] text-[12px] leading-[16px] text-[#3a73e6]">Rute</Fit>
        </div>
      </div>
      <div className="absolute bottom-[11px] left-[11px] h-[41px] w-[41px] rounded-[2px] bg-white p-[2px] shadow-[0_1px_4px_rgba(0,0,0,0.35)]">
        <svg className="h-full w-full" viewBox="0 0 38 38">
          <filter id="ground" colorInterpolationFilters="sRGB"><feTurbulence type="fractalNoise" baseFrequency=".35" numOctaves="3" seed="4" /><feColorMatrix values=".35 .1 0 0 .2 .3 .15 0 0 .19 .3 .1 .05 0 .18 0 0 0 0 1" /></filter>
          <rect width="38" height="38" fill="#6c6b68" />
          <rect width="38" height="38" filter="url(#ground)" />
        </svg>
      </div>
      <div className="absolute right-[10px] top-[345px] flex h-[81px] w-10 flex-col items-center rounded-[2px] bg-white shadow-[0_1px_4px_rgba(0,0,0,0.3)]">
        <svg className="h-10 w-10" viewBox="0 0 40 40"><path d="M20 11v18M11 20h18" stroke="#666" strokeWidth="4" /></svg>
        <div className="h-px w-[30px] bg-[#e6e6e6]" />
        <svg className="h-10 w-10" viewBox="0 0 40 40"><path d="M11 20h18" stroke="#666" strokeWidth="4" /></svg>
      </div>
      <div className="absolute bottom-0 right-0 flex h-[14px] w-[403px] items-center bg-[#f5f5f5]/70 pl-[6px] text-[10px] leading-[14px] text-black">
        <Fit w={82}>Pintasan keyboard</Fit>
        <Fit w={75} className="ml-3">Data peta ©2022</Fit>
        <Fit w={86} className="ml-3">Syarat Penggunaan</Fit>
        <Fit w={111} className="ml-[13px]">Laporkan kesalahan peta</Fit>
      </div>
    </div>
  );
}

/* ------------------------------------------------------------------ */
/* Web page                                                            */
/* ------------------------------------------------------------------ */

function LogoMark() {
  return (
    <svg className="h-[56px] w-[54px] shrink-0" viewBox="0 0 54 56">
      <path d="M33 36.500C24 29 13.500 23 13.500 13 13.500 6.500 18 2.700 23 2.700c4.500 0 8 2.300 10 5.800 2-3.500 5.500-5.800 10-5.800 5 0 9.700 3.800 9.700 10.300C52.700 23 42 29 33 36.500z" fill="#e173a4" />
      <path d="M43 2.700c5 0 9.700 3.800 9.700 10.300C52.700 23 42 29 33 36.500c6-8 10.500-15 10.500-24 0-4-.5-7-2.500-9.700z" fill="#c4618f" />
      <path d="M33 36.500C24 29 13.500 23 13.500 13 13.500 6.500 18 2.700 23 2.700c4.500 0 8 2.300 10 5.800 2-3.500 5.500-5.800 10-5.800 5 0 9.700 3.800 9.700 10.300C52.700 23 42 29 33 36.500z" fill="none" stroke="#6b4468" strokeWidth="1.200" />
      <path d="M17 20h5l2-4.500 2.500 6 2.500-9.500 3 17 3-13 1.800 6 1.400-2.500H50" fill="none" stroke="#fff" strokeWidth="1" />
      <path d="M11 34.500c5-1.500 9 .5 13 4l11 .5c3.500.2 4 4.500 1 5.500h2.500l9-4.500c3.500-1.500 6 1 3.500 3.300L36 53c-4 2.300-8 1.700-12 .3L11 49.500z" fill="#f5c19c" stroke="#7a5060" strokeWidth="1.200" />
      <path d="M25 45h12" stroke="#7a5060" strokeWidth="1.200" />
      <path d="M.900 33.500h9.300V48l-2.500 3H5.200C2.200 46 .700 40 .900 33.500z" fill="#fff" stroke="#6b5068" strokeWidth="1.300" />
    </svg>
  );
}

function Logo({ drop }: { drop: string }) {
  return (
    <div className="flex">
      <LogoMark />
      <span className={"flex gap-px text-[23.5px] leading-8 " + drop}>
        <Fit wide w={30} className="text-[#1a1a40]">Be</Fit>
        <span className="tracking-[1px]"><Fit wide w={98} className="text-[#800000]">Healthy</Fit></span>
      </span>
    </div>
  );
}

function PageView() {
  return (
    <div className="flex h-[969px] overflow-hidden bg-white">
      <div className="flex w-[1903px] flex-col font-['Inter',sans-serif] text-black">
        <header className="relative z-10 flex h-20 shrink-0 items-start justify-between bg-white pl-[61px] pr-[22px] pt-[14px] shadow-[0_5px_10px_rgba(0,0,0,0.1)]">
          <Logo drop="pt-[11px]" />
          <Fit w={200} className="mt-[15px] text-[15.5px] font-light leading-6 text-[#24224a]">KEMBALI KE BERANDA</Fit>
        </header>
        <main className="flex flex-col pl-[380.5px] text-[15.5px] leading-[25px]">
          <Fit wide w={296} className="-mt-[4px] h-[35px] text-[23.5px] font-semibold leading-9 tracking-[-0.2px]">Detail dari RSU Manuaba</Fit>
          <Fit wide w={154} className="mt-[25px]">Phone: 0361-437143</Fit>
          <Fit wide w={136}>Fax: 0361-429447</Fit>
          <Fit wide w={255}>Email: manuaba@indosat.net.id</Fit>
          <Fit wide w={126} className="mt-[25px] font-semibold text-[#800000]">Akun Instagram</Fit>
          <div className="flex">
            <Fit wide w={66} className="font-semibold">Alamat :</Fit>
            <Fit wide w={700} className="ml-[5px]">Jl. Cokroaminoto No.28, Pemecutan Kaja, Kec. Denpasar Utara, Kota Denpasar, Bali 80116</Fit>
          </div>
          <Fit wide w={96} className="mt-[25px] font-semibold">Peta Lokasi :</Fit>
          <div className="mt-[90px]"><MapView /></div>
        </main>
        <footer className="flex justify-between pl-[303px] pr-[309px] pt-[36px]">
          <Logo drop="pt-[25px]" />
          <div className="flex gap-4 pt-[20px]">
            <span className="h-10 w-10 rounded-full bg-[#4267b2]" />
            <span className="h-10 w-10 rounded-full bg-[#1da1f2]" />
            <span className="h-10 w-10 rounded-full bg-[#e1306c]" />
          </div>
        </footer>
      </div>
      <div className="flex h-full w-[17px] flex-col items-center bg-[#f1f1f1]">
        <svg className="h-[17px] w-[17px]" viewBox="0 0 17 17"><path d="M5 11h7L8.500 7z" fill="#505050" /></svg>
        <div className="mt-[337px] h-[442px] w-[13px] bg-[#c1c1c1]" />
        <svg className="mt-auto h-[17px] w-[17px]" viewBox="0 0 17 17"><path d="M5 6h7l-3.500 4z" fill="#505050" /></svg>
      </div>
    </div>
  );
}

/* ------------------------------------------------------------------ */
/* Browser chrome                                                      */
/* ------------------------------------------------------------------ */

function Ico({ w = 16, className = "", children }: { w?: number; className?: string; children: React.ReactNode }) {
  return (
    <svg width={w} height={w} viewBox="0 0 16 16" fill="none" className={"shrink-0 " + className}>{children}</svg>
  );
}

function Browser() {
  return (
    <div className="flex h-[71px] flex-col border-b border-[#d5d8dc] bg-white font-['Open_Sans',sans-serif]">
      <div className="flex h-[34px] items-center bg-[#dee1e6]">
        <div className="flex h-full w-2 bg-white"><span className="h-full w-full rounded-br-lg bg-[#dee1e6]" /></div>
        <div className="flex h-full w-60 items-center rounded-t-lg bg-white pl-3">
          <Ico>
            <circle cx="8" cy="8" r="7" fill="#5f6368" />
            <path d="M3 6.500L6 8l1.500-.5 1 1.500-1.500 2v2.500C4 13.500 2.300 11 2.300 8zM7 2.500L6.500 4.500l3 1.500-.5 1.500 2.500.5 1.800 2c.6-2.500-.2-5.500-3-7z" fill="#fff" />
          </Ico>
          <Fit w={117} className="ml-2 text-[12px] text-[#45474a]">RSUD/manuaba-ingfo</Fit>
          <Ico className="ml-[63px]"><path d="M4.300 4.300l7.400 7.400M11.700 4.300l-7.400 7.400" stroke="#3c4043" strokeWidth="1.600" /></Ico>
        </div>
        <div className="flex h-full w-2 bg-white"><span className="h-full w-full rounded-bl-lg bg-[#dee1e6]" /></div>
        <Ico className="ml-1.5"><path d="M8 2.300v11.400M2.300 8h11.400" stroke="#3c4043" strokeWidth="1.800" /></Ico>
        <div className="ml-auto flex gap-[30px] pb-[6px] pr-[15px]">
          <Ico><path d="M3.300 5.500L8 11l4.700-5.500" stroke="#111" /></Ico>
          <Ico><path d="M3 8.500h10" stroke="#111" /></Ico>
          <Ico><path d="M3.500 5.500h7v8h-7zM5.500 5.500v-2h7v8h-2" stroke="#111" /></Ico>
          <Ico><path d="M2.800 3l10.400 10.500M13.200 3L2.800 13.500" stroke="#111" /></Ico>
        </div>
      </div>
      <div className="flex h-9 items-center pl-[14px]">
        <Ico><path d="M15 8H2.500M8 2L2 8l6 6" stroke="#5f6368" strokeWidth="1.900" /></Ico>
        <Ico className="ml-4"><path d="M1 8h12.500M8 2l6 6-6 6" stroke="#bcbec1" strokeWidth="1.900" /></Ico>
        <Ico className="ml-4"><path d="M13.200 5A6 6 0 1 0 14 9.500" stroke="#5f6368" strokeWidth="1.900" /><path d="M14.700 1v6H8.700z" fill="#5f6368" /></Ico>
        <div className="ml-[14px] flex h-7 w-[1704px] items-center rounded-full bg-[#f1f3f4] pl-[10px] text-[13px]">
          <Ico><circle cx="8" cy="8" r="6.300" stroke="#5f6368" strokeWidth="1.500" /><path d="M8 7v4.300M8 4.500v1.500" stroke="#5f6368" strokeWidth="1.600" /></Ico>
          <Fit w={21} className="ml-2 pt-px text-[#6b6f73]">File</Fit>
          <span className="ml-[7px] h-4 w-px bg-[#9aa0a6]" />
          <Fit w={1001} className="ml-[9px] pt-px text-[#202124]">C:/Users/I%20PUTU%20AGUS%20SUTRISNA/Documents/mang%20duta/WEB%20Project/BeHealthy_I%20Nyoman%20Prema%20Duta_rsud/rsmanuaba-ingfo.html</Fit>
          <div className="ml-auto flex gap-4 pr-[10px]">
            <Ico>
              <path d="M1 1h6.500l1.300 3.500 1.700 8H2.300C1.500 12.500 1 12 1 11.300z" fill="#5f6368" />
              <path d="M8.500 4H15v11H8.500l2-2.500" stroke="#5f6368" />
              <path d="M6 5.300A2 2 0 1 0 6.700 7H5" stroke="#d5d7da" strokeWidth=".9" />
              <path d="M10 7.500h4M12 6.500v1M13.500 7.500c-.5 2-1.500 3-2.500 4M10.800 8.500c.7 1.500 1.700 2.500 2.700 3" stroke="#5f6368" strokeWidth=".9" />
            </Ico>
            <Ico><path d="M2 5.500V14.500H13V12M4.500 11c.3-4 2.500-5.800 5.800-5.800V2.300L15 6.500l-4.700 4.200V8c-2.500 0-4.300.7-5.800 3z" stroke="#5f6368" strokeWidth="1.100" /></Ico>
            <Ico><path d="M8 1.800l1.800 4.200 4.600.4-3.500 3 1.100 4.500L8 11.500 4 13.900l1.100-4.500-3.500-3L6.200 6z" stroke="#5f6368" strokeWidth="1.500" /></Ico>
          </div>
        </div>
        <Ico className="ml-[14px]"><path d="M1 1h14v14H1zM3.500 3.500v9H10v-9z" fill="#5f6368" fillRule="evenodd" /></Ico>
        <span className="ml-[13px] flex h-[22px] w-[22px] items-center justify-center rounded-full bg-[#dde1e7]">
          <Ico w={14}><circle cx="8" cy="4.500" r="3.200" fill="#566278" /><path d="M1.500 14v-1.500C1.500 9.500 5.500 9 8 9s6.500.5 6.500 3.500V14z" fill="#566278" /></Ico>
        </span>
        <Ico className="ml-[14px]"><circle cx="8" cy="3" r="1.500" fill="#5f6368" /><circle cx="8" cy="8" r="1.500" fill="#5f6368" /><circle cx="8" cy="13" r="1.500" fill="#5f6368" /></Ico>
      </div>
    </div>
  );
}

/* ------------------------------------------------------------------ */
/* Taskbar                                                             */
/* ------------------------------------------------------------------ */

function ChromeMark() {
  return (
    <g>
      <circle cx="12" cy="12" r="12" fill="#34a853" />
      <path d="M1.600 6A12 12 0 0 1 22.400 6H12L6.800 15z" fill="#ea4335" />
      <path d="M22.400 6A12 12 0 0 1 12 24L17.200 15 12 6z" fill="#fbbc04" />
      <circle cx="12" cy="12" r="6" fill="#fff" />
      <circle cx="12" cy="12" r="4.700" fill="#4285f4" />
    </g>
  );
}

const apps: { id: string; run?: boolean; active?: boolean; art: React.ReactNode }[] = [
  { id: "cortana", art: <circle cx="11.500" cy="12" r="6.700" fill="none" stroke="#fff" strokeWidth="1.900" /> },
  {
    id: "edge", art: <g>
      <circle cx="12" cy="12" r="12" fill="#0f74c8" />
      <path d="M.500 9.500C2 3.500 7 0 12.300 0 19 0 24 5 24 10.500c0 4-3 6-6.500 6-2.500 0-4-1-3.500-2.200 2-2.500.5-6.800-4-6.800-4.500 0-8.500 3-9.800 5z" fill="#35c1d8" />
      <path d="M14 .200C20 1 24 5.500 24 10.500c0 4-3 6-6.500 6-2.500 0-4-1-3.500-2.200 3-3.500 4-9 0-14z" fill="#5ddb7c" />
      <path d="M9 9c-3 4-1 11.500 6 12 3 .200 5.500-1 7-2.500-3 5-9.500 6.500-14.500 3.500C2 18 4 10 9 9z" fill="#0b4a9e" />
    </g>,
  },
  {
    id: "explorer", run: true, art: <g>
      <path d="M1 2.500h8l2 2.500H1z" fill="#e09a13" /><path d="M1 5h21.500v16.500H1z" fill="#ffd561" />
      <path d="M5 21.500v-9h14v9h-3.700V17H8.700v4.500z" fill="#3d8fe0" /><path d="M1 5h21.500v3H1z" fill="#fbc63f" />
    </g>,
  },
  {
    id: "store", art: <g>
      <path d="M7 5V1h10v4" fill="none" stroke="#27a3e8" strokeWidth="1.800" /><path d="M.800 5h22.400v16a2.500 2.500 0 0 1-2.500 2.500H3.300A2.500 2.500 0 0 1 .800 21z" fill="#f3f3f3" />
      <path d="M7 9.500h4.500V14H7z" fill="#f25022" /><path d="M12.500 9.500H17V14h-4.500z" fill="#7fba00" /><path d="M7 15h4.500v4.500H7z" fill="#00a4ef" /><path d="M12.500 15H17v4.500h-4.500z" fill="#ffb900" />
    </g>,
  },
  {
    id: "firefox", art: <g>
      <path d="M16 0c2 3 6.500 6 7 12.500C23 19 18 24 12 24S1 19 1 12.500C1 9 2.500 6 4 4.500L5 7.500 8 5l2 2.500C11 4.500 13 2 16 0z" fill="#ff6d2e" />
      <path d="M16 0c2 3 6.500 6 7 12.500-.5 4-3 6-4.500 6 1-5-1-9-5-10 0-3.500 1-6.500 2.500-8.500z" fill="#ffcb2f" />
      <circle cx="12" cy="13" r="5.200" fill="#7b45d6" /><path d="M1 12.500C2 20 8 22 12 21c4-.5 7-3 8-6-1 6-5 9-8 9C6 24 1 19 1 12.500z" fill="#ff3a5e" /><path d="M4 9c3-1.500 6 0 9 1.500-1.500 1.500-4 1-4.500 3.500C6 13 4 11.500 4 9z" fill="#ffb52e" />
    </g>,
  },
  { id: "photoshop", art: <g><path d="M1.500.500h21v19.500h-21z" fill="#0a0a4a" stroke="#6fb4f0" strokeWidth="1.600" /><text x="12" y="14.500" textAnchor="middle" fontSize="11.500" fontWeight="700" fill="#8fcbff">Ps</text></g> },
  { id: "illustrator", art: <g><path d="M1.500.500h21v19.500h-21z" fill="#2b1700" stroke="#f5a23a" strokeWidth="1.600" /><text x="12" y="14.500" textAnchor="middle" fontSize="11.500" fontWeight="700" fill="#f8aa45">Ai</text></g> },
  {
    id: "secure", run: true, art: <g>
      <circle cx="12" cy="12" r="11.500" fill="#f6a43a" /><path d="M8 1.500A11.500 11.500 0 0 1 22 18c1-6-1-12-14-11z" fill="#7a4cf0" /><path d="M1 8c1-4 5-6 8-5.500L6 9c-1 7 2 11 6 14.500C4 23 0 16 1 8z" fill="#f47a22" />
      <path d="M12 5l6.500 2.300c.5 6-1.500 10.200-6.500 12.700-5-2.500-7-6.700-6.500-12.700z" fill="#fff" /><circle cx="12" cy="10.800" r="1.900" fill="#3c3f66" /><path d="M11.200 11.500h1.600v4h-1.600z" fill="#3c3f66" />
    </g>,
  },
  {
    id: "code", run: true, art: <g>
      <path d="M17.500.500L24 3.500v17l-6.500 3z" fill="#29a7f0" /><path d="M17.500.500v6L3 18.500.500 16.500z" fill="#2489ca" /><path d="M17.500 23.500v-6L3 5.500.500 7.500z" fill="#1070b3" />
    </g>,
  },
  { id: "chrome", art: <ChromeMark /> },
  {
    id: "excel", art: <g>
      <path d="M6 1.500h9v7H6z" fill="#21a366" /><path d="M15 1.500h9v7h-9z" fill="#33c481" /><path d="M6 8.500h9V16H6z" fill="#107c41" /><path d="M15 8.500h9V16h-9z" fill="#21a366" /><path d="M6 16h18v6.500H6z" fill="#185c37" />
      <path d="M0 6h12.500v12.500H0z" fill="#107c41" /><path d="M3.500 8.800l5.500 7M9 8.800l-5.500 7" stroke="#fff" strokeWidth="1.700" />
    </g>,
  },
  { id: "spotify", run: true, art: <g><circle cx="12" cy="12" r="11.700" fill="#1ed760" /><path d="M4.500 8.300c5-1.500 11-1 15 1.500M5.300 12.300c4.500-1.300 9-.7 12.700 1.300M6 16c4-1 7.500-.5 10.700 1.200" fill="none" stroke="#181818" strokeWidth="1.900" strokeLinecap="round" /></g> },
  { id: "opera", art: <g><path fillRule="evenodd" d="M12 .300a11.200 11.700 0 1 0 0 23.400 11.200 11.700 0 1 0 0-23.400zm0 3.700c2.800 0 4.700 3.500 4.700 8s-1.900 8-4.700 8-4.700-3.500-4.700-8 1.900-8 4.700-8z" fill="#ee1c34" /><path d="M15 3.500c5 3 5 14 0 17a11 11 0 0 0 0-17z" fill="#a70014" /></g> },
  {
    id: "whatsapp", run: true, art: <g>
      <path d="M.500 23.500L2.200 17.500A11.500 11.500 0 1 1 6.500 21.800z" fill="#fff" /><path d="M3 21l1.200-4A9.500 9.500 0 1 1 7.500 20z" fill="#41c452" />
      <path d="M8 6.500c1-.7 1.500-.3 2 1 .5 1.200.3 1.500-.5 2.500 1 2 2.300 3.200 4.500 4.200 1-1.200 1.300-1.500 2.500-.9 1.500.8 1.800 1 1.200 2.200-.8 1.500-3 1.800-5 1-3.500-1.300-5.500-3.500-6.200-6-.3-1.500 0-3 1.500-4z" fill="#fff" />
      <circle cx="24" cy="18.500" r="8.500" fill="#2b2b2b" stroke="#a5a5a5" strokeWidth="1" /><text x="24" y="22.800" fontSize="12" fontWeight="600" textAnchor="middle" fill="#fff">10</text>
    </g>,
  },
  { id: "mail", art: <g><path d="M0 9.500L12 1l12 8.500v1H0z" fill="#0d5cae" /><path d="M3 8h18v8H3z" fill="#fff" /><path d="M0 9.500l12 7.500 12-7.500v13H0z" fill="#28a8ea" /><path d="M0 22.500L24 9.500v13z" fill="#54c8f5" opacity=".7" /></g> },
  { id: "chrome-active", run: true, active: true, art: <ChromeMark /> },
  {
    id: "help", run: true, art: <g>
      <path d="M9 0a8 8 0 1 1-1.500 15.800L2 18l1-4A8 8 0 0 1 9 0z" fill="#2fa8e6" /><circle cx="15" cy="15" r="8.500" fill="#1261b5" /><path d="M20 20l4 4-8-1z" fill="#1261b5" />
      <text x="15" y="20" fontSize="13" fontWeight="700" textAnchor="middle" fill="#fff">?</text>
    </g>,
  },
  { id: "notepad", run: true, art: <g><path d="M20 2l3 .5L20 22l-15-1z" fill="#d8c9a8" /><path d="M6 3l14-1.500-3.500 20L.800 18.500z" fill="#b7d5db" /><path d="M6 3l14-1.500-1 5L4.500 7.500z" fill="#7f9ba3" /><path d="M5 9l12.500-.5M4 12.500l13-.5M3 16l13-.3" stroke="#8fb3bb" strokeWidth=".7" /></g> },
  { id: "photos", run: true, art: <g><path d="M1 1.500h22v21H1z" fill="#27aaf0" /><path d="M1 18L9 9l14 13.500H1z" fill="#12468f" /><path d="M9 22.500l9-9 5 5v4z" fill="#1c64b8" /><path d="M13 13l5-2 5 6v3z" fill="#7b86e0" /><circle cx="16" cy="6.300" r="2.200" fill="#fff" /></g> },
];

function Taskbar() {
  return (
    <div className="flex h-10 items-center bg-[#1d1d1d] font-['Open_Sans',sans-serif] text-white">
      <div className="flex w-12 justify-center">
        <svg className="h-4 w-4" viewBox="0 0 16 16"><path d="M0 2.300L6.500 1.400v6.200H0zM7.300 1.300L16 0v7.600H7.300zM0 8.400h6.500v6.200L0 13.700zM7.300 8.400H16V16l-8.700-1.300z" fill="#fff" /></svg>
      </div>
      <div className="flex h-full w-[344px] items-center border border-[#bdbdbd] bg-white pl-[11px]">
        <svg className="h-[17px] w-[17px]" viewBox="0 0 17 17"><circle cx="10.500" cy="6" r="5" fill="none" stroke="#222" strokeWidth="1.200" /><path d="M7 9.500L.800 16" stroke="#222" strokeWidth="1.200" /></svg>
        <Fit w={128} className="ml-[11px] pt-[2px] text-[14.5px] text-[#2a2a2a]">Type here to search</Fit>
      </div>
      <div className="flex h-full pl-[0.6px]">
        {apps.map((a) => (
          <div key={a.id} className={"flex h-full w-[49.1px] flex-col items-center justify-between pt-2 " + (a.active ? "bg-[#4b4b4b]" : "")}>
            <svg className="h-6 w-6 overflow-visible" viewBox="0 0 24 24">{a.art}</svg>
            {a.run && <span className={"h-0.5 bg-[#76b9ed] " + (a.active ? "w-full" : "w-10")} />}
          </div>
        ))}
      </div>
      <div className="ml-auto flex h-full items-center text-[13.500px]">
        <svg className="h-6 w-6 shrink-0" viewBox="0 0 24 24">
          <path d="M16 2.500a9.500 9.500 0 1 1-13 14 10 10 0 0 0 13-14z" fill="#f6a531" /><path d="M4 18.500c6 1.500 12-2 14-8l4 3c-1.500 8-12 12-18 5z" fill="#ee8a25" />
          <path d="M3 10.500a3 3 0 0 1 0-5.500A5 5 0 0 1 11.500 4 3.300 3.300 0 0 1 13 10.500z" fill="#b9d4f7" /><circle cx="21" cy="4" r="3" fill="#d42a20" />
        </svg>
        <Fit w={29} className="ml-[8px] pt-px">27°C</Fit>
        <Fit w={36} className="ml-[9px] pt-px">Cerah</Fit>
        <Ico className="ml-[14px]"><path d="M2.500 11L8 5l5.500 6" stroke="#fff" strokeWidth="1.200" /></Ico>
        <Ico className="ml-[8px]"><path d="M3 5h7v7H3zM10 7.500l3-1.500v5l-3-1.500M4 2.500c2-1 4-1 6 0M4 14.500c2 1 4 1 6 0" stroke="#fff" strokeWidth="1.100" /></Ico>
        <Ico className="ml-[8px]"><path d="M1.500 14A12 12 0 0 1 13.500 3M4.500 14.300A9.500 9.500 0 0 1 13.500 6M7.500 14.500A6.500 6.500 0 0 1 13.500 9M10 14.500a4 4 0 0 1 3.500-3" stroke="#ddd" strokeWidth="1.100" /><circle cx="12.800" cy="13.800" r="1.200" fill="#fff" /></Ico>
        <Ico className="ml-[7px]"><path d="M5 5.500h10v7H4.500V9M15.500 7.500v3" stroke="#fff" strokeWidth="1.100" /><path d="M6 7h4v4H6z" fill="#fff" /><path d="M1.500 3v2M4 3v2M.800 5.200h4V7L2.800 8.500.800 7zM2.800 8v3" stroke="#fff" /></Ico>
        <Ico className="ml-[8px]"><path d="M1 3.500l14-1.500V10M1 3.500V13h8" stroke="#fff" strokeWidth="1.100" /><path d="M5 8a3 3 0 0 1 5-1.500M10 8.500A3 3 0 0 1 5.500 11" stroke="#fff" strokeWidth="1.300" /><circle cx="12.700" cy="12.500" r="3.200" fill="#ff9500" /></Ico>
        <Ico className="ml-[7px]"><path d="M1.500 6h2.300L7 3v10L3.800 10H1.500z" stroke="#fff" strokeWidth="1.100" /><path d="M9.500 5.800l4.500 4.500M14 5.800l-4.500 4.500" stroke="#fff" strokeWidth="1.100" /></Ico>
        <Fit w={23} className="ml-[11px] text-[12px]">ENG</Fit>
        <div className="ml-[10px] flex w-[58px] flex-col items-center text-[11.500px] leading-[18px]">
          <Fit w={48}>10:28 PM</Fit>
          <Fit w={58}>10/22/2022</Fit>
        </div>
        <svg className="ml-[14px] h-8 w-[26px]" viewBox="0 0 26 32">
          <path d="M1 8h16v11H10v3l-3-3H1z" fill="#fff" /><path d="M3.500 11h11M3.500 13.500h11M3.500 16h8" stroke="#1d1d1d" />
          <circle cx="16.300" cy="23" r="7.800" fill="#2b2b2b" stroke="#9a9a9a" /><text x="16.300" y="27" fontSize="11" fontWeight="600" textAnchor="middle" fill="#fff">5</text>
        </svg>
        <span className="ml-[11px] mr-1 h-full w-px bg-[#6a6a6a]" />
      </div>
    </div>
  );
}

export default function App() {
  return (
    <div className="flex h-[1080px] w-[1920px] flex-col overflow-hidden bg-white">
      <Browser />
      <PageView />
      <Taskbar />
    </div>
  );
}
